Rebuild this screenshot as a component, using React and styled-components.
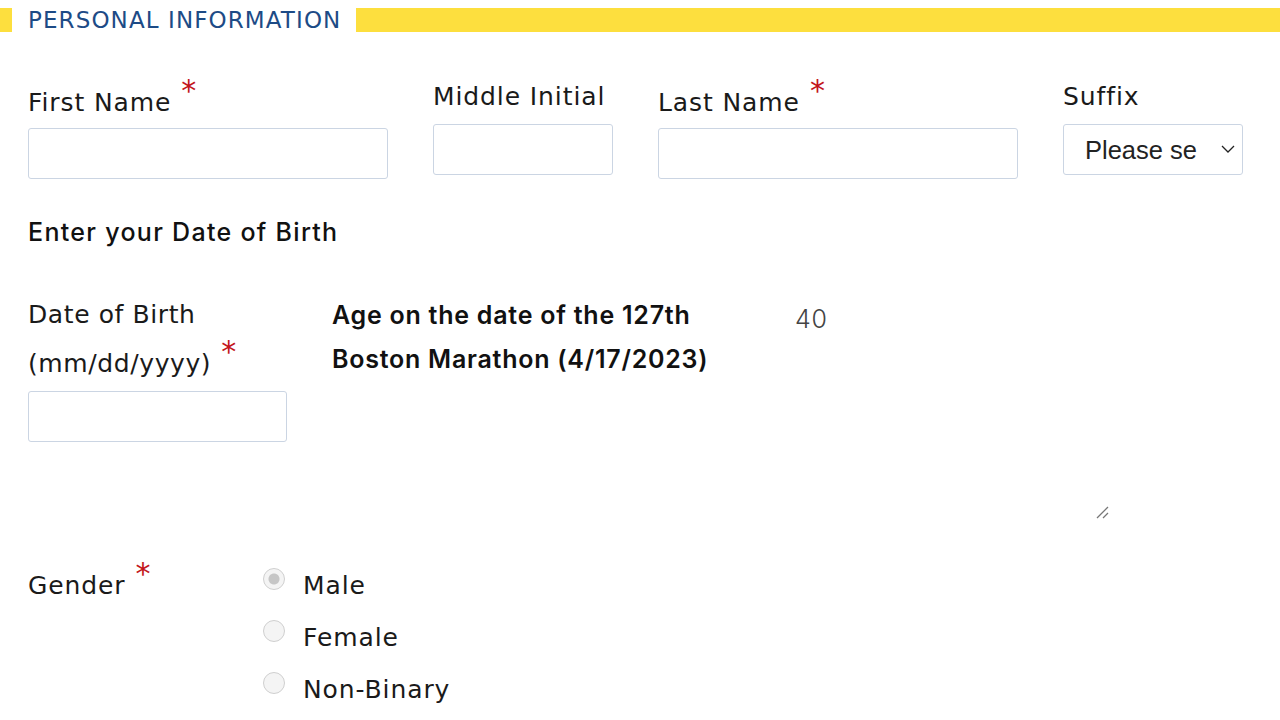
import React from 'react'
import styled, { createGlobalStyle } from 'styled-components'

const GlobalStyle = createGlobalStyle`
    body {
        margin: 0;
        background: #fff;
        font-family: "DejaVu Sans", "Noto Sans", sans-serif;
        color: #1a1a1a;
    }
`

const App = () => {
    return (
        <Page>
            <GlobalStyle />
            <SectionHeader>
                <HeaderBar $width="12px" />
                <HeaderTitle>PERSONAL INFORMATION</HeaderTitle>
                <HeaderBar />
            </SectionHeader>

            <NameRow>
                <Field $width="360px" $required>
                    <Label>First Name<Star>*</Star></Label>
                    <TextInput />
                </Field>
                <Field $width="180px">
                    <Label>Middle Initial</Label>
                    <TextInput />
                </Field>
                <Field $width="360px" $required>
                    <Label>Last Name<Star>*</Star></Label>
                    <TextInput />
                </Field>
                <Field $width="180px">
                    <Label>Suffix</Label>
                    <SelectWrap>
                        <Select defaultValue="">
                            <option value="">Please select</option>
                            <option>Jr.</option>
                            <option>Sr.</option>
                            <option>II</option>
                            <option>III</option>
                        </Select>
                        <Chevron width="14" height="8" viewBox="0 0 14 8">
                            <path d="M1 1l6 6 6-6" fill="none" stroke="#222" strokeWidth="1.3" />
                        </Chevron>
                    </SelectWrap>
                </Field>
            </NameRow>

            <SubHeading>Enter your Date of Birth</SubHeading>

            <BirthRow>
                <BirthField>
                    <TallLabel>Date of Birth<br />(mm/dd/yyyy)<Star>*</Star></TallLabel>
                    <TextInput />
                </BirthField>
                <AgeLabel>Age on the date of the 127th<br />Boston Marathon (4/17/2023)</AgeLabel>
                <AgeValue>40</AgeValue>
            </BirthRow>

            <GripRow>
                <svg width="16" height="16" viewBox="0 0 16 16">
                    <path d="M3 14L14 3M9 14L14 9" stroke="#777" strokeWidth="1.3" />
                </svg>
            </GripRow>

            <GenderRow>
                <Label>Gender<Star>*</Star></Label>
                <RadioList>
                    {['Male', 'Female', 'Non-Binary'].map((g, i) => (
                        <RadioOption key={g}>
                            <Radio type="radio" name="gender" defaultChecked={i === 0} />
                            {g}
                        </RadioOption>
                    ))}
                </RadioList>
            </GenderRow>
        </Page>
    )
}

export default App

const Page = styled.div`
    width: 1280px;
    height: 720px;
    overflow: hidden;
    padding-top: 8px;
    box-sizing: border-box;
`

const SectionHeader = styled.div`
    display: flex;
    align-items: center;
    height: 24px;
`

const HeaderBar = styled.div`
    height: 24px;
    background: #fddf3e;
    flex: ${props => props.$width ? `0 0 ${props.$width}` : '1'};
`

const HeaderTitle = styled.h1`
    margin: 0;
    padding: 0 15px 0 16px;
    font-size: 23px;
    font-weight: 400;
    color: #1d4b86;
    white-space: nowrap;
    letter-spacing: 1.1px;
`

const NameRow = styled.div`
    display: flex;
    align-items: flex-start;
    gap: 45px;
    padding: 50px 0 0 28px;
`

const Field = styled.div`
    display: flex;
    flex-direction: column;
    width: ${props => props.$width};
    padding-top: ${props => props.$required ? '4px' : '0'};
`

const Label = styled.label`
    display: block;
    font-size: 25px;
    line-height: 30px;
    height: 30px;
    margin-bottom: 12px;
    letter-spacing: 0.9px;
    color: #1a1a1a;
    white-space: nowrap;
`

const Star = styled.span`
    color: #c3161c;
    font-size: 30px;
    margin-left: 10px;
    position: relative;
    top: -10px;
`

const TextInput = styled.input`
    box-sizing: border-box;
    width: 100%;
    height: 51px;
    border: 1px solid #cbd5e3;
    border-radius: 3px;
    background: #fff;
    font-size: 20px;
    padding: 0 12px;
    outline: none;
`

const SelectWrap = styled.div`
    position: relative;
    width: 100%;
`

const Select = styled.select`
    appearance: none;
    box-sizing: border-box;
    width: 100%;
    height: 51px;
    border: 1px solid #cbd5e3;
    border-radius: 3px;
    background: #fff;
    padding: 0 44px 0 21px;
    font-family: "Liberation Sans", Arial, sans-serif;
    font-size: 25.5px;
    color: #222;
    outline: none;
`

const Chevron = styled.svg`
    position: absolute;
    right: 8px;
    top: 21px;
    pointer-events: none;
`

const SubHeading = styled.h2`
    margin: 38px 0 0 28px;
    font-family: Inter, "DejaVu Sans", sans-serif;
    font-size: 25px;
    line-height: 30px;
    font-weight: 500;
    letter-spacing: 1.3px;
    color: #111;
`

const BirthRow = styled.div`
    display: flex;
    align-items: flex-start;
    padding: 44px 0 0 28px;
`

const BirthField = styled.div`
    display: flex;
    flex-direction: column;
    width: 259px;
    margin-right: 45px;
`

const TallLabel = styled.div`
    font-size: 25px;
    line-height: 47px;
    letter-spacing: 0.6px;
    margin-bottom: 4px;
    white-space: nowrap;
`

const AgeLabel = styled.div`
    width: 463px;
    padding-top: 2px;
    font-family: Inter, "DejaVu Sans", sans-serif;
    font-size: 25px;
    line-height: 44px;
    font-weight: 600;
    letter-spacing: 0.75px;
    color: #111;
`

const AgeValue = styled.div`
    font-family: Inter, "DejaVu Sans", sans-serif;
    font-size: 25px;
    line-height: 44px;
    font-weight: 300;
    letter-spacing: 0.8px;
    color: #444;
    padding-top: 6px;
`

const GripRow = styled.div`
    display: flex;
    justify-content: flex-end;
    padding: 62px 170px 0 0;
    height: 16px;
`

const GenderRow = styled.div`
    display: grid;
    grid-template-columns: 235px 1fr;
    padding: 49px 0 0 28px;
`

const RadioList = styled.div`
    display: flex;
    flex-direction: column;
    gap: 18px;
`

const RadioOption = styled.label`
    display: flex;
    align-items: center;
    gap: 18px;
    font-size: 25px;
    line-height: 34px;
    letter-spacing: 0.9px;
    color: #1a1a1a;
`

const Radio = styled.input`
    appearance: none;
    margin: 0;
    width: 22px;
    height: 22px;
    border-radius: 50%;
    border: 1px solid #cfcfcf;
    background: #f4f4f4;
    position: relative;
    top: -7px;
    &:checked {
        background: radial-gradient(circle, #c6c6c6 0 5px, #f4f4f4 6px);
    }
`
